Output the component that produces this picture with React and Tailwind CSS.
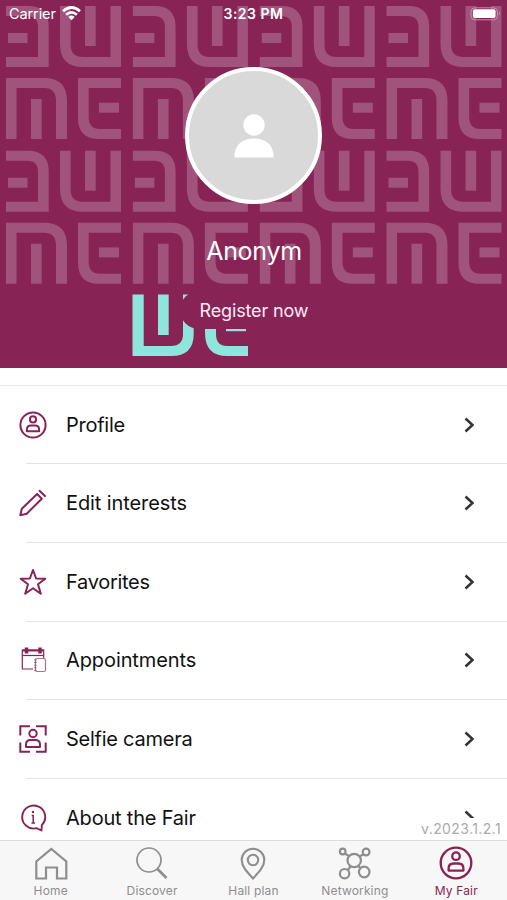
import React from "react";

const TILE_COLUMNS = [0, 126.9, 253.8, 380.5];
const TILE_ROWS = [0, 144.7];

const PatternTile = ({ x, y }) => (
  <g transform={`translate(${x} ${y})`}>
    <path d="M6 6H28Q48.700 6 48.700 27V67H6V57H38V27Q38 16 27 16H6Z" />
    <path d="M8 33H27.500V43H8Z" />
    <path d="M60 6H70.700V45Q70.700 57 83 57H110.500V6H121V67H83Q60 67 60 44Z" />
    <path d="M85 6H95.700V46H85Z" />
    <path d="M6 139V78H44Q67 78 67 101V139H56V101Q56 88 44 88H16.500V139Z" />
    <path d="M31 99H41.700V139H31Z" />
    <path d="M78 78H121V88H88.700V117Q88.700 129 100 129H121V139H99Q78 139 78 118Z" />
    <path d="M99 102.700H119V112.700H99Z" />
  </g>
);

const HeaderArt = () => (
  <svg className="absolute inset-0" width="507" height="368" viewBox="0 0 507 368">
    <g fill="#a0537b">
      {TILE_ROWS.map((y) =>
        TILE_COLUMNS.map((x) => <PatternTile key={`${x}-${y}`} x={x} y={y} />)
      )}
    </g>
    <g fill="#8ee5dc">
      <path d="M132.500 294.500H143.700V346H171Q183 346 183 334V294.500H193.700V334Q193.700 356 171 356H132.500Z" />
      <path d="M158 294.500H168.700V335H158Z" />
      <path d="M205 294.500H248V304.500H216V334Q216 346 227 346H248V356H227Q205 356 205 333Z" />
      <path d="M226 320.500H246V331.200H226Z" />
    </g>
  </svg>
);

const StatusBar = () => (
  <div className="relative flex h-7 items-center justify-between pl-[9px] pr-[5px] text-white">
    <div className="flex w-[120px] items-center gap-[6px]">
      <span className="text-[14.5px] leading-none tracking-[-0.1px]">Carrier</span>
      <svg className="-mt-[2px]" width="19" height="15" viewBox="0 0 19 15" fill="none" stroke="white" strokeWidth="2.700">
        <path d="M1 5.300Q9.500-2.300 18 5.300" />
        <path d="M4.100 8.700Q9.500 4 14.900 8.700" />
        <path d="M6.300 10.900Q9.500 8.300 12.700 10.900L9.500 14.200Z" fill="white" stroke="none" />
      </svg>
    </div>
    <span className="relative -left-[2px] text-[14px] font-semibold leading-none tracking-[0.5px]">3:23 PM</span>
    <div className="flex w-[120px] justify-end">
      <svg className="-mt-px" width="36" height="14" viewBox="0 0 36 14">
        <rect x="5" y="0.800" width="26.500" height="12" rx="4" fill="none" stroke="#c58fab" strokeWidth="1" />
        <rect x="7" y="2.300" width="22.500" height="8.800" rx="2" fill="white" />
        <path d="M33 4.500Q35 6.500 33 8.500Z" fill="#c58fab" />
      </svg>
    </div>
  </div>
);

const ProfileIcon = ({ size = 28, strokeWidth = 2 }) => (
  <svg width={size} height={size} viewBox="0 0 28 28" fill="none" stroke="currentColor" strokeWidth={strokeWidth}>
    <circle cx="14" cy="14" r="12.600" />
    <circle cx="14" cy="8.400" r="3.100" />
    <path d="M7.900 20.200V18.500Q7.900 14.400 12 14.400H16Q20.100 14.400 20.100 18.500V20.200Z" strokeLinejoin="round" />
  </svg>
);

const EditIcon = () => (
  <svg width="28" height="28" viewBox="0 0 28 28" fill="none" stroke="currentColor" strokeWidth="2">
    <path d="M1.300 26.300L2.800 19.800L18.100 5L22.800 9.800L7.700 24.700Z" strokeLinejoin="round" />
    <path d="M20 1.300L26.700 7.800" />
  </svg>
);

const StarIcon = () => (
  <svg width="28" height="28" viewBox="0 0 28 28" fill="none" stroke="currentColor" strokeWidth="2" strokeLinejoin="round">
    <path d="M14 2L17.100 10.500L26.300 10.700L19 16.300L21.800 25.700L14 20.200L6.200 25.700L9 16.300L1.700 10.700L10.900 10.500Z" />
  </svg>
);

const AppointmentsIcon = () => (
  <svg width="28" height="28" viewBox="0 0 28 28" fill="none" stroke="currentColor">
    <path d="M14 23H3.300V4H24.700V12" strokeWidth="1.200" />
    <path d="M3.300 9.500H24.700" strokeWidth="1.200" />
    <path d="M3 4.500H25" strokeWidth="2" />
    <path d="M7.500 1.500V7.500M21 1.500V7.500" strokeWidth="3.500" />
    <rect x="16.500" y="12.500" width="10" height="13" rx="1.500" strokeWidth="1.200" opacity="0.65" />
    <path d="M16.300 13.500V25" strokeWidth="2.600" strokeDasharray="1 1.600" opacity="0.6" />
  </svg>
);

const SelfieIcon = () => (
  <svg width="28" height="28" viewBox="0 0 28 28" fill="none" stroke="currentColor" strokeWidth="2">
    <path d="M1.300 10.500V1.300H11M17 1.300H26.700V10.500M26.700 17.500V26.700H17M11 26.700H1.300V17.500" />
    <circle cx="14" cy="8.500" r="3.700" />
    <path d="M7 22V19.500Q7 15 11.500 15H16.500Q21 15 21 19.500V22Z" strokeLinejoin="round" />
  </svg>
);

const AboutIcon = () => (
  <svg width="28" height="28" viewBox="0 0 28 28" fill="none" stroke="currentColor" strokeWidth="1.900">
    <path d="M17.500 24.200A11.500 11.500 0 1 1 22.800 21.200L22.500 26.500Z" strokeLinejoin="round" />
    <path d="M12.700 11.500H14.200V18.500M12.500 19H16" strokeWidth="1.500" />
    <circle cx="14" cy="8" r="1.200" fill="currentColor" stroke="none" />
  </svg>
);

const HomeIcon = () => (
  <svg width="36" height="36" viewBox="0 0 36 36" fill="none" stroke="currentColor" strokeWidth="2.200">
    <path d="M3.300 33.500V16.500L18.300 4L33.300 16.500V33.500H24V22.500H13V33.500Z" />
  </svg>
);

const DiscoverIcon = () => (
  <svg width="36" height="36" viewBox="0 0 36 36" fill="none" stroke="currentColor">
    <circle cx="15" cy="15" r="12" strokeWidth="1.700" />
    <path d="M23 23.500L32.500 33" strokeWidth="2.600" />
  </svg>
);

const HallPlanIcon = () => (
  <svg width="36" height="36" viewBox="0 0 36 36" fill="none" stroke="currentColor" strokeWidth="2.100">
    <path d="M18 33.500C12 27 6.700 21.500 6.700 15A11.300 11.300 0 0 1 29.300 15C29.300 21.500 24 27 18 33.500Z" />
    <circle cx="18" cy="15" r="5.200" />
  </svg>
);

const NetworkingIcon = () => (
  <svg width="36" height="36" viewBox="0 0 36 36" fill="none" stroke="currentColor" strokeWidth="2.200">
    <circle cx="17.200" cy="15.500" r="6.700" />
    <circle cx="5.700" cy="6.500" r="2.800" />
    <circle cx="29.100" cy="7" r="3.400" />
    <circle cx="7.600" cy="28.700" r="4.700" />
    <circle cx="27.200" cy="27" r="5.300" />
    <path d="M8 8.500L12 11.200M26.500 9.300L22.500 11.500M13.500 21.500L10.800 25M21 21.200L23.700 23" />
  </svg>
);

const MyFairIcon = () => (
  <span className="flex h-9 w-9 items-center justify-center pr-px">
    <ProfileIcon size={34} strokeWidth={1.9} />
  </span>
);

const menuItems = [
  { label: "Profile", icon: ProfileIcon, text: "tracking-[-0.25px]" },
  { label: "Edit interests", icon: EditIcon, text: "tracking-[-0.1px]" },
  { label: "Favorites", icon: StarIcon, text: "tracking-[-0.3px]" },
  { label: "Appointments", icon: AppointmentsIcon, text: "tracking-[-0.1px]" },
  { label: "Selfie camera", icon: SelfieIcon, text: "tracking-[-0.25px]" },
  { label: "About the Fair", icon: AboutIcon, text: "tracking-[-0.2px]" },
];

const tabs = [
  { label: "Home", icon: HomeIcon },
  { label: "Discover", icon: DiscoverIcon },
  { label: "Hall plan", icon: HallPlanIcon },
  { label: "Networking", icon: NetworkingIcon },
  { label: "My Fair", icon: MyFairIcon, active: true },
];

const MenuRow = ({ item, first }) => {
  const Icon = item.icon;
  return (
    <div className={`relative flex shrink-0 items-center pl-[19px] pr-[31px] pt-[1px] ${first ? "h-[77.4px]" : "h-[78.6px]"}`}>
      {!first && <div className="absolute left-[26px] right-0 top-0 h-px bg-[#e4e4e4]" />}
      <span className="text-[#882455]">
        <Icon />
      </span>
      <span className={`ml-[19px] flex-1 text-[20px] text-[#111111] ${item.text}`}>{item.label}</span>
      <svg width="13" height="18" viewBox="0 0 13 18" fill="none" stroke="#333333" strokeWidth="2.500">
        <path d="M2.500 2.500L9.500 9L2.500 15.500" />
      </svg>
    </div>
  );
};

export default function App() {
  return (
    <div className="flex h-[900px] w-[507px] flex-col overflow-hidden bg-white font-['Inter',sans-serif]">
      {/* Header */}
      <header className="relative h-[368px] shrink-0 bg-[#882455]">
        <HeaderArt />
        <StatusBar />
        <div className="relative flex flex-col items-center pt-[39px]">
          <div className="flex h-[137px] w-[137px] items-center justify-center rounded-full border-[4.500px] border-white bg-[#d9d9d9]">
            <svg width="40" height="44" viewBox="0 0 40 44" fill="white">
              <circle cx="20" cy="11" r="10.700" />
              <path d="M0.500 43.500V40Q3 24.500 20 24.500Q37 24.500 39.500 40V43.500Z" />
            </svg>
          </div>
          <h1 className="mt-[28px] pl-px text-[25px] leading-[38px] tracking-[-0.3px] text-white">Anonym</h1>
          <button className="mt-[21px] h-[38px] w-[147px] rounded-full bg-[#882455] pl-px pt-px text-[18px] tracking-[-0.15px] text-[#fdeaf4]">
            Register now
          </button>
        </div>
      </header>
      <div className="h-[18px] shrink-0 border-b border-[#e9e9e9]" />

      {/* Menu */}
      <main className="relative flex h-[454px] shrink-0 flex-col overflow-hidden">
        {menuItems.map((item, index) => (
          <MenuRow key={item.label} item={item} first={index === 0} />
        ))}
        <span className="absolute bottom-0 right-0 bg-white pl-1 pr-[6px] text-[14px] leading-[22px] tracking-[0.4px] text-[#aaaaaa]">
          v.2023.1.2.1
        </span>
      </main>

      {/* Tab bar */}
      <nav className="grid h-[60px] shrink-0 grid-cols-5 border-t border-[#dcdcdc] bg-[#f7f7f7]">
        {tabs.map(({ label, icon: Icon, active }) => (
          <div
            key={label}
            className={`flex flex-col items-center pt-[4px] ${active ? "text-[#882455]" : "text-[#8e8e8e]"}`}
          >
            <Icon />
            <span className="mt-px text-[12px] leading-[17px] tracking-[0.15px]">{label}</span>
          </div>
        ))}
      </nav>
    </div>
  );
}
